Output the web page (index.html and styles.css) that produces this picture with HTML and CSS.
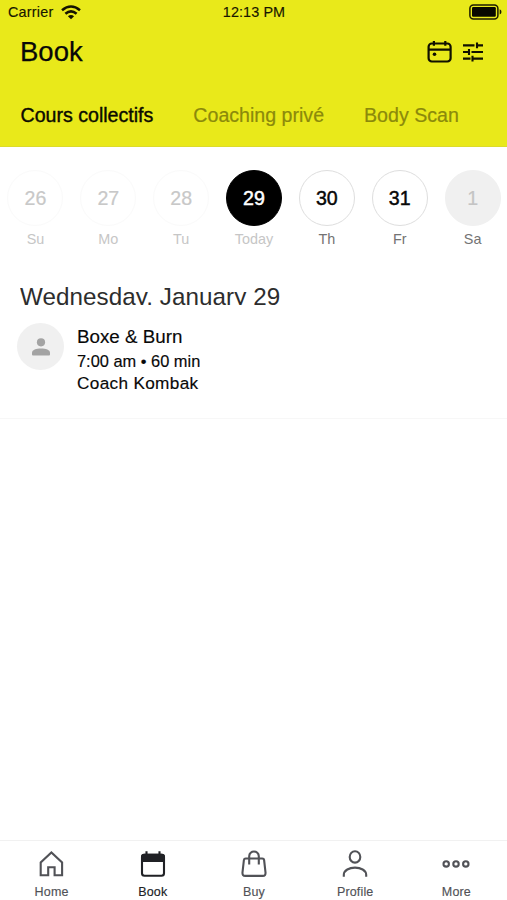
FILE: index.html
```html
<!DOCTYPE html>
<html lang="en">
<head>
<meta charset="utf-8">
<title>Book</title>
<link rel="stylesheet" href="styles.css">
</head>
<body>
<div class="app">
  <header class="header">
    <div class="status">
      <div class="carrier"><span>Carrier</span>
        <svg class="wifi" width="20" height="15" viewBox="0 0 20 15" fill="none" stroke="#151400" stroke-width="2.6"><path d="M1 5.2Q10-2.2 19 5.2M4.4 8.7Q10 4.1 15.6 8.7"/><path d="M6.9 11.2Q10 8.8 13.1 11.2L10 14.3Z" fill="#151400" stroke="none"/></svg>
      </div>
      <span class="clock">12:13 PM</span>
      <svg class="battery" width="33" height="16" viewBox="0 0 33 16"><rect x=".9" y=".9" width="28" height="14" rx="3.5" fill="none" stroke="#1c1b00" stroke-width="1.5"/><rect x="3" y="3" width="23.8" height="9.8" rx="1.2" fill="#080800"/><path d="M30.7 5.2Q32.5 6 32.5 7.9T30.7 10.6Z" fill="#1c1b00"/></svg>
    </div>
    <div class="titlebar">
      <h1>Book</h1>
      <div class="actions">
        <svg width="26" height="24" viewBox="0 0 26 24" fill="none" stroke="#111000" stroke-width="2.2"><rect x="1.6" y="3.5" width="22" height="18" rx="3.2"/><path d="M1.6 9.7H23.6M6.9 1V5.8M18.3 1V5.8"/><circle cx="7.5" cy="14.2" r="1.8" fill="#111000" stroke="none"/></svg>
        <svg width="20" height="20" viewBox="0 0 20 20" fill="none" stroke="#111000" stroke-width="2.1"><path d="M0 3.4H11.5M14 3.4H20M14 .5V6.3M0 10H6M8.5 10H20M6 7V13M0 16.6H7.5M9.5 16.6H20M9.5 13.7V19.6"/></svg>
      </div>
    </div>
    <nav class="tabs"><span class="tab active">Cours collectifs</span><span class="tab">Coaching privé</span><span class="tab">Body Scan</span></nav>
  </header>
  <main>
    <div class="week">
      <div class="day past"><span class="num">26</span><span class="label">Su</span></div>
      <div class="day past"><span class="num">27</span><span class="label">Mo</span></div>
      <div class="day past"><span class="num">28</span><span class="label">Tu</span></div>
      <div class="day today"><span class="num">29</span><span class="label">Today</span></div>
      <div class="day"><span class="num">30</span><span class="label">Th</span></div>
      <div class="day"><span class="num">31</span><span class="label">Fr</span></div>
      <div class="day closed"><span class="num">1</span><span class="label">Sa</span></div>
    </div>
    <h2>Wednesday, January 29</h2>
    <article class="session">
      <div class="avatar"><svg width="18" height="18" viewBox="0 0 18 18" fill="#a3a3a3"><circle cx="9" cy="4.3" r="4.1"/><path d="M0 16.4V14.6C0 11.8 4.2 10.4 9 10.4S18 11.8 18 14.6V16.4Q18 17.5 17 17.5H1Q0 17.5 0 16.4Z"/></svg></div>
      <div class="details"><h3>Boxe &amp; Burn</h3><p class="time">7:00 am • 60 min</p><p class="coach">Coach Kombak</p></div>
    </article>
  </main>
  <nav class="bottom">
    <div class="item"><svg width="28" height="28" viewBox="0 0 28 28"><path d="M2.7 25.3V12.4L13.4 2.5L24.1 12.4V25.3H16.6V17.2H10.2V25.3Z"/></svg><span>Home</span></div>
    <div class="item selected"><svg width="28" height="28" viewBox="0 0 28 28"><rect x="3" y="4.8" width="22" height="21" rx="2.5"/><path d="M2 12V6.8Q2 3.8 5 3.8H23Q26 3.8 26 6.8V12Z" fill="#202125" stroke="none"/><path d="M7.5 1.3V5M20.5 1.3V5"/></svg><span>Book</span></div>
    <div class="item"><svg width="28" height="28" viewBox="0 0 28 28"><path d="M5.7 8.5H22.3Q23.9 8.5 24.1 10L25.5 22.4Q25.8 25.9 22.8 25.9H5.2Q2.2 25.9 2.5 22.4L3.9 10Q4.1 8.5 5.7 8.5ZM9.2 14.5V6.2C9.2 0 18.8 0 18.8 6.2V14.5"/></svg><span>Buy</span></div>
    <div class="item"><svg width="28" height="28" viewBox="0 0 28 28"><ellipse cx="14" cy="6.9" rx="5.3" ry="5.7"/><path d="M2.8 26.7V25C2.8 15.2 25.2 15.2 25.2 25V26.7"/></svg><span>Profile</span></div>
    <div class="item"><svg width="28" height="28" viewBox="0 0 28 28"><circle cx="4.2" cy="13.9" r="2.7"/><circle cx="14" cy="13.9" r="2.7"/><circle cx="23.8" cy="13.9" r="2.7"/></svg><span>More</span></div>
  </nav>
</div>
</body>
</html>
```
FILE: styles.css
```css
* { box-sizing: border-box; }
body { margin: 0; background: #fff; color: #080808; font-family: "Liberation Sans", Arial, sans-serif; }
h1, h2, h3, p { margin: 0; font-weight: 400; }
svg { display: block; flex: none; }
.app { display: flex; flex-direction: column; height: 900px; overflow: hidden; }
.header { height: 147px; background: #e9e91a; border-bottom: 1px solid #dcdb2b; }
.status { display: grid; grid-template-columns: 1fr auto 1fr; align-items: center; height: 24px; padding: 0 5px 0 8px; font-size: 14.4px; color: #171600; -webkit-text-stroke: .15px; }
.carrier { display: flex; align-items: center; gap: 8px; letter-spacing: .2px; }
.clock { margin-left: -2px; letter-spacing: .1px; }
.battery { justify-self: end; }
.titlebar { display: flex; align-items: center; justify-content: space-between; height: 55px; padding: 0 24px 0 20px; }
h1 { font-size: 27.5px; line-height: 54px; -webkit-text-stroke: .25px; }
.actions { display: flex; align-items: center; gap: 10px; }
.tabs { display: flex; gap: 40px; height: 67px; padding: 0 20.5px; line-height: 73px; font-size: 19.6px; white-space: nowrap; }
.tab { color: #8b890b; -webkit-text-stroke: .2px; }
.active { color: #0b0b00; -webkit-text-stroke: .4px; }
.week { display: flex; width: 510px; margin-left: -1px; padding-top: 23px; }
.day { flex: 1; display: flex; flex-direction: column; align-items: center; }
.num { display: grid; place-items: center; width: 56px; height: 56px; border: 1px solid #dedede; border-radius: 50%; font-size: 19.6px; -webkit-text-stroke: .45px; }
.label { margin-top: 4px; font-size: 14.4px; line-height: 18px; color: #737373; }
.past .num { color: #c8c8c8; border-color: #fafafa; -webkit-text-stroke-width: .2px; }
.past .label, .today .label { color: #c6c6c6; }
.today .num { background: #000; border-color: #000; color: #fff; }
.closed .num { background: #f0f0f0; border-color: #f0f0f0; color: #c4c4c4; -webkit-text-stroke-width: .2px; }
h2 { height: 20px; margin: 37px 20px 0; overflow: hidden; font-size: 24.2px; line-height: 24px; letter-spacing: .08px; color: #2d2d2d; }
.session { display: flex; height: 114px; padding: 18px 0 0 17px; border-bottom: 1px solid #f7f7f7; }
.avatar { display: grid; place-items: center; width: 47px; height: 47px; border-radius: 50%; background: #f0f0f0; }
.details { margin-left: 13px; padding-top: 1px; -webkit-text-stroke: .15px; }
h3 { font-size: 18.8px; line-height: 26px; }
.time { font-size: 16.4px; line-height: 23px; }
.coach { font-size: 17.2px; line-height: 20px; letter-spacing: .33px; }
.bottom { display: grid; grid-template-columns: repeat(5, 1fr); height: 60px; margin-top: auto; padding-left: 1px; border-top: 1px solid #f1f1f1; }
.item { display: flex; flex-direction: column; align-items: center; padding-top: 9px; font-size: 12.5px; line-height: 16px; color: #515257; letter-spacing: .15px; -webkit-text-stroke: .15px; }
.item svg { fill: none; stroke: #515257; stroke-width: 2.1; }
.item span { margin-top: 6px; }
.selected { color: #202125; }
.selected svg { stroke: #202125; }
```
